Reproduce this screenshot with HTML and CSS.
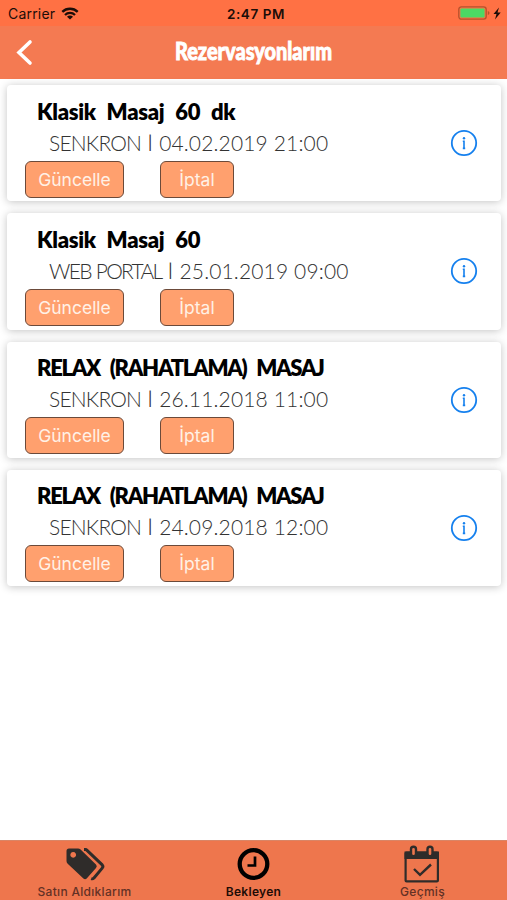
FILE: index.html
```html
<!DOCTYPE html>
<html lang="tr">
<head>
    <meta charset="UTF-8">
    <meta name="viewport" content="width=device-width, initial-scale=1.0">
    <title>Rezervasyonlarım</title>
    <link rel="stylesheet" href="styles.css">
</head>
<body>
    <div class="status-bar">
        <div class="carrier">
            <span>Carrier</span>
            <svg width="18" height="13" viewBox="0 0 18 13" fill="none" stroke="#1c0d08" stroke-width="2.3">
                <path d="M1.3 4.9a11 11 0 0 1 15.4 0"/>
                <path d="M4 8a7.1 7.1 0 0 1 10 0"/>
                <path d="M9 12.6 6 9.8a4.2 4.2 0 0 1 6 0z" fill="#1c0d08" stroke="none"/>
            </svg>
        </div>
        <div class="clock">2:47 PM</div>
        <div class="power">
            <svg width="44" height="16" viewBox="0 0 44 16">
                <rect x=".8" y="1.8" width="27.4" height="12.4" rx="2.6" fill="none" stroke="#b5522c" stroke-width="1.3"/>
                <rect x="2.4" y="3.4" width="24.2" height="9.2" rx="1" fill="#4cd964"/>
                <path d="M29.8 6v4q1.7-.5 1.7-2t-1.7-2z" fill="#b5522c"/>
                <path d="M41 2.5 35.5 9h3l-1.5 5.5 5.7-7h-3.2z" fill="#1c0d08"/>
            </svg>
        </div>
    </div>

    <header class="nav-bar">
        <svg width="18" height="28" viewBox="0 0 18 28" fill="none" stroke="#fff" stroke-width="3.6" stroke-linecap="round">
            <path d="M14 3 3 13.5 14 24"/>
        </svg>
        <h1>Rezervasyonlarım</h1>
    </header>

    <main class="list">
        <div class="card">
            <div class="details">
                <h2>Klasik Masaj 60 dk</h2>
                <p><span class="branch">SENKRON</span><span class="bar">|</span><span>04.02.2019 21:00</span></p>
                <div class="buttons">
                    <button class="update">Güncelle</button>
                    <button class="cancel">İptal</button>
                </div>
            </div>
            <svg width="28" height="28" viewBox="0 0 28 28"><circle cx="14" cy="14" r="12.2" fill="none" stroke="#1580ee" stroke-width="1.8"/><circle cx="14" cy="9.2" r="1.2" fill="#1580ee"/><path d="M12.8 12.3H14v7.2M12.8 19.4h2.4" fill="none" stroke="#1580ee" stroke-width="1.6"/></svg>
        </div>
        <div class="card">
            <div class="details">
                <h2>Klasik Masaj 60</h2>
                <p><span class="branch portal">WEB PORTAL</span><span class="bar">|</span><span>25.01.2019 09:00</span></p>
                <div class="buttons">
                    <button class="update">Güncelle</button>
                    <button class="cancel">İptal</button>
                </div>
            </div>
            <svg width="28" height="28" viewBox="0 0 28 28"><circle cx="14" cy="14" r="12.2" fill="none" stroke="#1580ee" stroke-width="1.8"/><circle cx="14" cy="9.2" r="1.2" fill="#1580ee"/><path d="M12.8 12.3H14v7.2M12.8 19.4h2.4" fill="none" stroke="#1580ee" stroke-width="1.6"/></svg>
        </div>
        <div class="card">
            <div class="details">
                <h2 class="caps">RELAX (RAHATLAMA) MASAJ</h2>
                <p><span class="branch">SENKRON</span><span class="bar">|</span><span>26.11.2018 11:00</span></p>
                <div class="buttons">
                    <button class="update">Güncelle</button>
                    <button class="cancel">İptal</button>
                </div>
            </div>
            <svg width="28" height="28" viewBox="0 0 28 28"><circle cx="14" cy="14" r="12.2" fill="none" stroke="#1580ee" stroke-width="1.8"/><circle cx="14" cy="9.2" r="1.2" fill="#1580ee"/><path d="M12.8 12.3H14v7.2M12.8 19.4h2.4" fill="none" stroke="#1580ee" stroke-width="1.6"/></svg>
        </div>
        <div class="card">
            <div class="details">
                <h2 class="caps">RELAX (RAHATLAMA) MASAJ</h2>
                <p><span class="branch">SENKRON</span><span class="bar">|</span><span>24.09.2018 12:00</span></p>
                <div class="buttons">
                    <button class="update">Güncelle</button>
                    <button class="cancel">İptal</button>
                </div>
            </div>
            <svg width="28" height="28" viewBox="0 0 28 28"><circle cx="14" cy="14" r="12.2" fill="none" stroke="#1580ee" stroke-width="1.8"/><circle cx="14" cy="9.2" r="1.2" fill="#1580ee"/><path d="M12.8 12.3H14v7.2M12.8 19.4h2.4" fill="none" stroke="#1580ee" stroke-width="1.6"/></svg>
        </div>
    </main>

    <nav class="tab-bar">
        <div class="tab">
            <svg width="40" height="42" viewBox="0 0 40 42">
                <path d="M4 7.5h9q1.5 0 2.6 1L31 23.6q1.6 1.8 0 3.4l-9.300 10.5q-1.6 1.6-3.3 0L2.700 22.8Q1.5 21.5 1.5 20V10q0-2.5 2.5-2.5zM8.2 11a2.9 2.9 0 1 0 .01 0z" fill="#2f2c2a" fill-rule="evenodd"/>
                <path d="M19 8.6h1.3q1 0 2 1l14.9 14.3q1.4 1.6 0 3.2L29 37q-1.3 1.2-2.800.6" fill="none" stroke="#2f2c2a" stroke-width="3"/>
            </svg>
            <span>Satın Aldıklarım</span>
        </div>
        <div class="tab active">
            <svg width="40" height="42" viewBox="0 0 40 42" fill="none" stroke="#000">
                <circle cx="19.5" cy="23" r="13.8" stroke-width="4.3"/>
                <path d="M21 15.5v9h-7.5" stroke-width="2.7"/>
            </svg>
            <span>Bekleyen</span>
        </div>
        <div class="tab">
            <svg width="40" height="42" viewBox="0 0 40 42" fill="none" stroke="#2f2c2a">
                <path d="M1.5 10.5H36V18H1.5z" fill="#2f2c2a" stroke="none"/>
                <rect x="2.6" y="11.5" width="32.3" height="28.9" rx="1" stroke-width="2.2"/>
                <rect x="8" y="5.8" width="5" height="9.5" rx="2.5" fill="#ee764d" stroke-width="2.4"/>
                <rect x="24.5" y="5.8" width="5" height="9.5" rx="2.5" fill="#ee764d" stroke-width="2.4"/>
                <path d="m11 28 6 5.8L28 23.5" stroke-width="2.4"/>
            </svg>
            <span>Geçmiş</span>
        </div>
    </nav>
</body>
</html>
```
FILE: styles.css
```css
* {
    box-sizing: border-box;
}

body {
    margin: 0;
    height: 900px;
    display: flex;
    flex-direction: column;
    font-family: Inter, "Liberation Sans", sans-serif;
    background-color: white;
    overflow: hidden;
}

.status-bar {
    height: 26px;
    padding: 0 5px 0 8px;
    display: grid;
    grid-template-columns: 1fr auto 1fr;
    align-items: center;
    background-color: #ff7144;
    color: #1c0d08;
    font-size: 14px;
}

.carrier {
    display: flex;
    align-items: center;
    gap: 6px;
    letter-spacing: 0.2px;
}

.clock {
    font-size: 13.5px;
    font-weight: 600;
    letter-spacing: 0.6px;
    padding: 1px 0 0 2px;
}

.power {
    display: flex;
    justify-content: flex-end;
}

.nav-bar {
    height: 53px;
    padding: 0 16px;
    display: grid;
    grid-template-columns: 18px 1fr 18px;
    align-items: center;
    background-color: #f47a52;
}

.nav-bar h1 {
    margin: 0;
    padding-bottom: 3px;
    color: white;
    font-family: Lato, sans-serif;
    font-size: 24px;
    font-weight: 900;
    line-height: 28px;
    text-align: center;
    transform: scaleX(0.83);
    -webkit-text-stroke: 0.9px white;
}

.list {
    flex: 1;
    padding: 6px 6px 0 7px;
    display: flex;
    flex-direction: column;
    gap: 12px;
}

.card {
    height: 116.3px;
    padding-right: 23px;
    display: flex;
    justify-content: space-between;
    align-items: center;
    background-color: white;
    border-radius: 4px;
    box-shadow: 0 1px 8px rgba(0, 0, 0, 0.24);
}

.details {
    height: 100%;
    padding: 11.5px 0 0 18px;
}

.card h2 {
    margin: 0 0 0 12px;
    font-family: Lato, sans-serif;
    font-size: 22px;
    font-weight: 800;
    line-height: 29px;
    white-space: nowrap;
    word-spacing: 6px;
    letter-spacing: -0.3px;
    color: black;
}

.card .caps {
    letter-spacing: -1.3px;
}

.card p {
    margin: 0 0 2px 24px;
    display: flex;
    font-family: Lato, sans-serif;
    font-size: 21px;
    font-weight: 300;
    line-height: 33px;
    letter-spacing: 0.15px;
    white-space: nowrap;
    color: #333;
}

.card .branch {
    letter-spacing: -0.8px;
}

.card .portal {
    letter-spacing: -1.7px;
    word-spacing: 1px;
}

.card .bar {
    width: 18px;
    font-size: 17px;
    font-weight: 400;
    line-height: 31px;
    text-align: center;
}

.buttons {
    display: flex;
    gap: 36px;
}

.buttons button {
    height: 37px;
    padding: 0;
    border: 1.5px solid #6b4a3a;
    border-radius: 6px;
    background-color: #ffa06e;
    color: #fff1e6;
    font-family: Inter, sans-serif;
    font-size: 17.5px;
}

.buttons .update {
    width: 99px;
}

.buttons .cancel {
    width: 74px;
}

.tab-bar {
    height: 60px;
    display: flex;
    background-color: #ee764d;
    border-top: 1px solid #d98566;
}

.tab {
    flex: 1;
    display: flex;
    flex-direction: column;
    align-items: center;
    color: #633125;
    font-size: 12px;
    font-weight: 500;
    letter-spacing: 0.3px;
}

.tab svg {
    flex-shrink: 0;
}

.tab span {
    line-height: 17px;
}

.active {
    color: #1d0c06;
    font-weight: 600;
}
```
